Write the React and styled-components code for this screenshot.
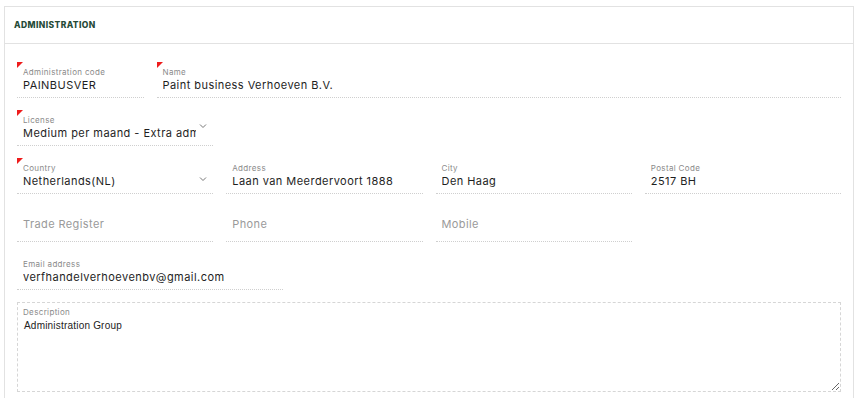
import React from 'react'
import styled, { createGlobalStyle } from 'styled-components'

const GlobalStyle = createGlobalStyle`
  body {
    margin: 0;
    background: #fff;
    font-family: 'Inter', 'Liberation Sans', sans-serif;
  }
`

const Page = styled.div`
  padding: 6px 6px 0 4px;
`

const Card = styled.section`
  width: 850px;
  box-sizing: border-box;
  border: 1px solid #e2e2e2;
  background: #fff;
`

const Header = styled.header`
  height: 36px;
  display: flex;
  align-items: center;
  padding-left: 9px;
  border-bottom: 1px solid #e2e2e2;
  font-size: 8.5px;
  font-weight: 800;
  letter-spacing: 0.4px;
  color: #254a37;
  text-transform: uppercase;
`

const Body = styled.div`
  padding: 18px 12px 6px 12px;
  display: grid;
  grid-template-columns: repeat(12, 1fr);
  column-gap: 13px;
  row-gap: 12px;
`

const Field = styled.div`
  position: relative;
  grid-column: span ${p => p.$span};
  height: 36px;
  box-sizing: border-box;
  border-bottom: 1px dotted #cfcfcf;
  padding: 5px 6px 0 6px;
`

const Required = styled.span`
  position: absolute;
  left: 0;
  top: 0;
  width: 0;
  height: 0;
  border-top: 6px solid #ee1c1c;
  border-right: 6px solid transparent;
`

const Label = styled.div`
  font-size: 8px;
  line-height: 10px;
  letter-spacing: 0.35px;
  color: #8a8a8a;
`

const Value = styled.div`
  font-size: 11px;
  line-height: 14px;
  margin-top: 1px;
  letter-spacing: 0.45px;
  color: #1e1e1e;
  white-space: nowrap;
  overflow: hidden;
  margin-right: ${p => (p.$select ? '11px' : '0')};
`

const Placeholder = styled.div`
  font-size: 11px;
  line-height: 14px;
  letter-spacing: 0.4px;
  padding-top: 6px;
  color: #9a9a9a;
`

const Chevron = styled.svg`
  position: absolute;
  right: 6px;
  top: ${p => p.$top}px;
  width: 8px;
  height: 6px;
`

const Spacer = styled.div`
  grid-column: span ${p => p.$span};
`

const DescriptionBox = styled.div`
  position: relative;
  grid-column: span 12;
  height: 90px;
`

const DescriptionLabel = styled.div`
  position: absolute;
  left: 6px;
  top: 5px;
  font-size: 8px;
  line-height: 10px;
  letter-spacing: 0.35px;
  color: #8a8a8a;
`

const TextArea = styled.textarea`
  width: 100%;
  height: 100%;
  box-sizing: border-box;
  border: 1px dashed #d6d6d6;
  padding: 17px 6px 4px 6px;
  font-family: 'Liberation Sans', Arial, sans-serif;
  font-size: 10px;
  line-height: 12px;
  letter-spacing: 0.2px;
  color: #222;
  resize: both;
  outline: none;
`

function Arrow({ top }) {
  return (
    <Chevron $top={top} viewBox="0 0 8 6">
      <path d="M1 1.5 L4 4.5 L7 1.5" fill="none" stroke="#777" strokeWidth="1" />
    </Chevron>
  )
}

function InputField({ span, label, value, required, select, arrowTop = 18 }) {
  return (
    <Field $span={span}>
      {required && <Required />}
      {value ? (
        <>
          <Label>{label}</Label>
          <Value $select={select}>{value}</Value>
        </>
      ) : (
        <Placeholder>{label}</Placeholder>
      )}
      {select && <Arrow top={arrowTop} />}
    </Field>
  )
}

export default function App() {
  return (
    <Page>
      <GlobalStyle />
      <Card>
        <Header>Administration</Header>
        <Body>
          <InputField span={2} required label="Administration code" value="PAINBUSVER" />
          <InputField span={10} required label="Name" value="Paint business Verhoeven B.V." />

          <InputField span={3} required select arrowTop={13} label="License" value="Medium per maand - Extra administratie" />
          <Spacer $span={9} />

          <InputField span={3} required select label="Country" value="Netherlands(NL)" />
          <InputField span={3} label="Address" value="Laan van Meerdervoort 1888" />
          <InputField span={3} label="City" value="Den Haag" />
          <InputField span={3} label="Postal Code" value="2517 BH" />

          <InputField span={3} label="Trade Register" />
          <InputField span={3} label="Phone" />
          <InputField span={3} label="Mobile" />
          <Spacer $span={3} />

          <InputField span={4} label="Email address" value="verfhandelverhoevenbv@gmail.com" />
          <Spacer $span={8} />

          <DescriptionBox>
            <DescriptionLabel>Description</DescriptionLabel>
            <TextArea defaultValue="Administration Group" />
          </DescriptionBox>
        </Body>
      </Card>
    </Page>
  )
}
